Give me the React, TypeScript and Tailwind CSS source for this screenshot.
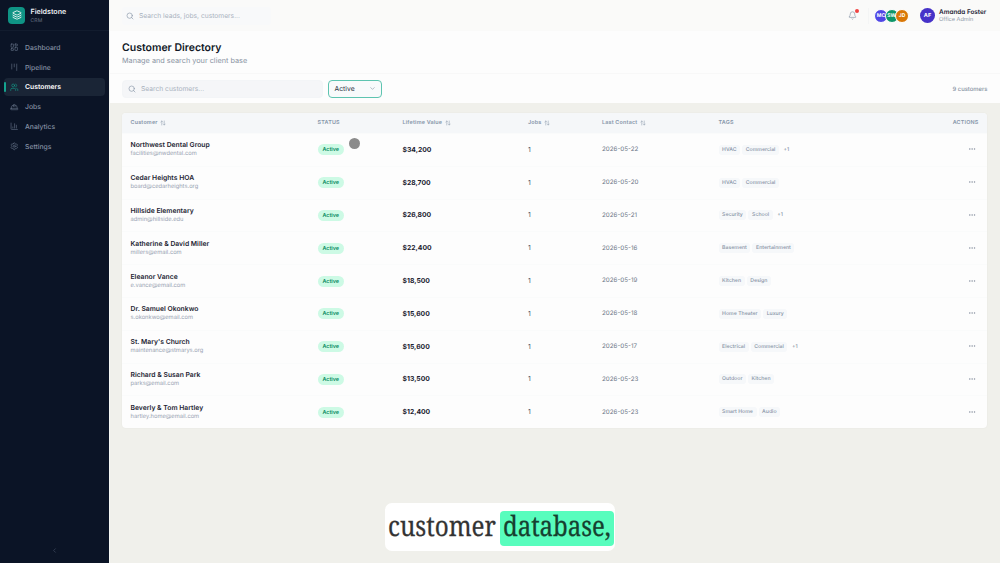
import React from "react";
import {
  ArrowUpDown,
  Bell,
  ChartColumn,
  ChevronDown,
  ChevronLeft,
  Ellipsis,
  HardHat,
  Kanban,
  Layers,
  LayoutDashboard,
  Search,
  Settings,
  Users,
} from "lucide-react";

const nav = [
  { label: "Dashboard", Icon: LayoutDashboard },
  { label: "Pipeline", Icon: Kanban },
  { label: "Customers", Icon: Users, active: true },
  { label: "Jobs", Icon: HardHat },
  { label: "Analytics", Icon: ChartColumn },
  { label: "Settings", Icon: Settings },
];

type Customer = {
  name: string;
  email: string;
  value: string;
  date: string;
  tags: string[];
  more?: string;
};

const customers: Customer[] = [
  { name: "Northwest Dental Group", email: "facilities@nwdental.com", value: "$34,200", date: "2026-05-22", tags: ["HVAC", "Commercial"], more: "+1" },
  { name: "Cedar Heights HOA", email: "board@cedarheights.org", value: "$28,700", date: "2026-05-20", tags: ["HVAC", "Commercial"] },
  { name: "Hillside Elementary", email: "admin@hillside.edu", value: "$26,800", date: "2026-05-21", tags: ["Security", "School"], more: "+1" },
  { name: "Katherine & David Miller", email: "millers@email.com", value: "$22,400", date: "2026-05-16", tags: ["Basement", "Entertainment"] },
  { name: "Eleanor Vance", email: "e.vance@email.com", value: "$18,500", date: "2026-05-19", tags: ["Kitchen", "Design"] },
  { name: "Dr. Samuel Okonkwo", email: "s.okonkwo@email.com", value: "$15,600", date: "2026-05-18", tags: ["Home Theater", "Luxury"] },
  { name: "St. Mary's Church", email: "maintenance@stmarys.org", value: "$15,600", date: "2026-05-17", tags: ["Electrical", "Commercial"], more: "+1" },
  { name: "Richard & Susan Park", email: "parks@email.com", value: "$13,500", date: "2026-05-23", tags: ["Outdoor", "Kitchen"] },
  { name: "Beverly & Tom Hartley", email: "hartley.home@email.com", value: "$12,400", date: "2026-05-23", tags: ["Smart Home", "Audio"] },
];

const columns = "grid grid-cols-[187px_85px_125.5px_74px_116.5px_1fr] items-center pl-[8.5px] pr-[8.5px]";

function Sidebar() {
  return (
    <aside className="flex w-[109px] shrink-0 flex-col bg-[#0b1426]">
      <div className="flex h-[31px] items-center gap-[5.5px] border-b border-[#121c2e] pl-2">
        <div className="flex size-[17px] items-center justify-center rounded-[4px] bg-[#0f9485] text-white">
          <Layers size={10} strokeWidth={2} />
        </div>
        <div className="flex flex-col pt-[1px]">
          <span className="text-[7.1px] leading-[9px] font-semibold text-[#eef1f5]">Fieldstone</span>
          <span className="mt-[2px] text-[5px] leading-[6px] tracking-[0.2px] text-[#6b7688]">CRM</span>
        </div>
      </div>
      <nav className="flex flex-col gap-[1.3px] pt-[7.2px] pr-[4px] pl-[4px]">
        {nav.map(({ label, Icon, active }) => (
          <div
            key={label}
            className={
              active
                ? "flex h-[18.5px] items-center rounded-[4px] bg-[#1a2536] text-white"
                : "flex h-[18.5px] items-center rounded-[4px] text-[#8490a3]"
            }
          >
            <span className={active ? "h-[10.5px] w-[1.5px] rounded-full bg-[#14a38f]" : "h-[10.5px] w-[1.5px]"} />
            <Icon size={8.5} strokeWidth={1.7} className={active ? "ml-[4.5px] text-[#14a38f]" : "ml-[4.5px] text-[#68758a]"} />
            <span className={active ? "ml-[6.5px] pt-[1px] text-[6.8px] font-semibold" : "ml-[6.5px] pt-[1px] text-[6.8px] font-medium"}>{label}</span>
          </div>
        ))}
      </nav>
      <div className="mt-auto flex h-[25px] items-center justify-center text-[#4a566a]">
        <ChevronLeft size={7} />
      </div>
    </aside>
  );
}

function TopBar() {
  return (
    <header className="flex h-[31px] items-center justify-between bg-[#fafaf9] pr-[14px] pl-[12px]">
      <div className="flex h-[18px] w-[149px] items-center gap-[5px] rounded-[4px] bg-[#f8f9fa] pl-[4px] text-[#8b98a9]">
        <Search size={8} strokeWidth={2} />
        <span className="pt-[1px] text-[6.7px] text-[#a9b2be]">Search leads, jobs, customers...</span>
      </div>
      <div className="flex items-center">
        <div className="relative mr-[11px] text-[#8b98a9]">
          <Bell size={9} strokeWidth={1.8} />
          <span className="absolute -top-[2px] -right-[2px] size-[4px] rounded-full bg-[#ef4444]" />
        </div>
        <div className="mr-[5.5px] h-4 w-px bg-[#f4f5f5]" />
        <div className="flex text-[5px] leading-[8px] font-bold text-white">
          <span className="flex size-[14px] items-center justify-center rounded-full border border-white bg-[#4f46e5] pt-[1px]">MC</span>
          <span className="-ml-[3.5px] flex size-[14px] items-center justify-center rounded-full border border-white bg-[#0d9668] pt-[1px]">SW</span>
          <span className="-ml-[3.5px] flex size-[14px] items-center justify-center rounded-full border border-white bg-[#d97706] pt-[1px]">JD</span>
        </div>
        <span className="ml-[11px] flex size-[15px] items-center justify-center rounded-full bg-[#4632c8] pt-[1px] text-[5.5px] font-bold text-white">AF</span>
        <div className="ml-[4px] flex w-[47px] flex-col whitespace-nowrap">
          <span className="text-[6.4px] leading-[8px] font-semibold text-[#1b2333] [font-feature-settings:'cv11']">Amanda Foster</span>
          <span className="text-[5.6px] leading-[8px] text-[#8e98a8] [font-feature-settings:'cv11']">Office Admin</span>
        </div>
      </div>
    </header>
  );
}

function SortLabel({ children }: { children: string }) {
  return (
    <div className="flex items-center gap-[2.5px]">
      <span>{children}</span>
      <ArrowUpDown size={6} strokeWidth={2} />
    </div>
  );
}

function CustomerTable() {
  return (
    <section className="h-[315px] overflow-hidden rounded-[4px] bg-[#fdfdfd] shadow-[0_0_2px_rgba(15,23,42,0.06)]">
      <div className={`${columns} h-[20px] bg-[#f5f7f9] text-[5.4px] font-semibold tracking-[0.2px] text-[#8796a9]`}>
        <SortLabel>Customer</SortLabel>
        <span>STATUS</span>
        <SortLabel>Lifetime Value</SortLabel>
        <SortLabel>Jobs</SortLabel>
        <SortLabel>Last Contact</SortLabel>
        <div className="flex justify-between">
          <span>TAGS</span>
          <span>ACTIONS</span>
        </div>
      </div>
      {customers.map((c) => (
        <div key={c.name} className={`${columns} h-[32.8px] border-t border-[#fafbfb] text-[6.25px]`}>
          <div className="flex flex-col pb-[0.4px]">
            <span className="text-[6.8px] leading-[10px] font-semibold text-[#1e2533]">{c.name}</span>
            <span className="text-[5.75px] leading-[8.6px] text-[#98a2b1]">{c.email}</span>
          </div>
          <div className="flex">
            <span className="flex h-[11px] w-[26.5px] items-center justify-center rounded-full bg-[#cdfae5] pt-[1px] text-[5.4px] font-semibold text-[#0b8a62]">
              Active
            </span>
          </div>
          <span className="text-[6.8px] font-bold text-[#1b2230]">{c.value}</span>
          <span className="text-[6.8px] text-[#4b5565]">1</span>
          <span className="text-[#6b7686]">{c.date}</span>
          <div className="flex items-center justify-between">
            <div className="flex items-center gap-[2px] text-[5.2px] font-medium text-[#8693a5]">
              {c.tags.map((t) => (
                <span key={t} className="rounded-[3px] bg-[#f6f8fa] px-[3.6px] py-[1px] leading-[8px]">
                  {t}
                </span>
              ))}
              {c.more && <span className="ml-[2.5px] leading-[8px]">{c.more}</span>}
            </div>
            <Ellipsis size={8} strokeWidth={1.6} className="mr-[2.5px] mb-[1px] text-[#7c8797]" />
          </div>
        </div>
      ))}
    </section>
  );
}

export default function App() {
  return (
    <div className="relative flex h-[563px] w-[1000px] overflow-hidden bg-[#f0f0eb] font-['Inter',sans-serif] [text-rendering:geometricPrecision]">
      <Sidebar />
      <main className="flex flex-1 flex-col border-l border-[#f5f7f4]">
        <TopBar />
        <div className="flex h-[43px] flex-col border-b border-[#f8f8f8] bg-[#fdfdfd] pt-[9.5px] pl-[12px]">
          <h1 className="text-[10.5px] leading-[14px] font-semibold text-[#111827]">Customer Directory</h1>
          <p className="text-[7.3px] leading-[12px] text-[#8a94a3]">Manage and search your client base</p>
        </div>
        <div className="flex h-[29px] items-center bg-[#fdfdfd] pr-[12.5px] pl-[12px]">
          <div className="flex h-[18px] w-[201px] items-center gap-[5px] rounded-[4px] border border-[#f3f5f7] bg-[#f5f6f8] pl-[5px] text-[#8b98a9]">
            <Search size={8} strokeWidth={2} />
            <span className="pt-[1px] text-[6.7px] text-[#a9b2be]">Search customers...</span>
          </div>
          <div className="ml-[5px] flex h-[18px] w-[54px] items-center justify-between rounded-[4px] border border-[#5ec4b0] bg-[#f8fafb] pr-[5px] pl-[5.5px] text-[6.8px] text-[#2a3342]">
            <span className="pt-[1px]">Active</span>
            <ChevronDown size={7} className="text-[#8390a0]" />
          </div>
          <span className="ml-auto pt-[3px] text-[5.9px] font-medium text-[#8793a3]">9 customers</span>
        </div>
        <div className="pt-[10px] pr-[13px] pl-[12px]">
          <CustomerTable />
        </div>
      </main>

      <div className="absolute top-[138px] left-[348.5px] size-[11px] rounded-full bg-[#8b8b8b]" />

      <div className="absolute top-[503px] left-[385px] flex h-[48px] w-[230px] items-center rounded-[7px] bg-white font-['Noto_Serif','DejaVu_Serif_Condensed','DejaVu_Serif',serif] text-[28px] whitespace-nowrap">
        <div className="flex h-[36px] w-[115px] items-center pb-[3px] pl-[3px] text-[#333333] [-webkit-text-stroke:0.3px_#333333]">
          <span className="origin-left scale-x-[0.865]">customer</span>
        </div>
        <div className="mt-[2px] flex h-[35px] w-[114px] items-center rounded-[4px] bg-[#58fdbd] pb-[5px] pl-[3px] text-[#16402f] [-webkit-text-stroke:0.3px_#16402f]">
          <span className="origin-left scale-x-[0.855]">database,</span>
        </div>
      </div>
    </div>
  );
}
